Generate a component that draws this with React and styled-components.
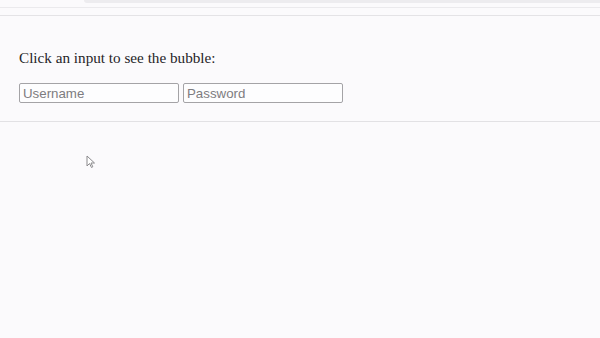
import React from "react";
import styled, { createGlobalStyle } from "styled-components";

const Global = createGlobalStyle`
    html, body {
        margin: 0;
        padding: 0;
        background: #fbfafc;
    }
    body {
        width: 600px;
        height: 338px;
        overflow: hidden;
        position: relative;
    }
`;

const Page = styled.div`
    width: 600px;
    height: 338px;
    display: flex;
    flex-direction: column;
    position: relative;
`;

const TopBar = styled.div`
    height: 15px;
    display: flex;
    flex-direction: column;
    border-bottom: 1px solid #e4e3e6;
`;

const Tab = styled.div`
    height: 3px;
    margin-left: 84px;
    background: #edecef;
    border-bottom-left-radius: 4px;
`;

const Rule = styled.div`
    height: 1px;
    margin-top: 4px;
    background: #ebeaed;
`;

const Section = styled.div`
    padding: 33px 19px 18px;
    border-bottom: 1px solid #e2e1e4;
    display: flex;
    flex-direction: column;
    gap: 16px;
`;

const Prompt = styled.p`
    margin: 0;
    font-family: "Liberation Serif", "Times New Roman", serif;
    font-size: 15.2px;
    line-height: 18px;
    color: #262528;
`;

const Fields = styled.div`
    display: flex;
    gap: 4px;
`;

const Field = styled.input`
    box-sizing: border-box;
    width: 160px;
    height: 20px;
    padding: 1px 3px;
    border: 1px solid #a4a3a6;
    border-radius: 2px;
    background: #fdfdfe;
    font-family: "Liberation Sans", Arial, sans-serif;
    font-size: 13.3px;
    color: #222;
    outline: none;

    &::placeholder {
        color: #7d7c80;
    }
`;

const Cursor = styled.svg`
    position: absolute;
    left: 86px;
    top: 155px;
`;

export default function App() {
    return (
        <Page>
            <Global />
            <TopBar>
                <Tab />
                <Rule />
            </TopBar>
            <Section>
                <Prompt>Click an input to see the bubble:</Prompt>
                <Fields>
                    <Field type="text" placeholder="Username" />
                    <Field type="password" placeholder="Password" />
                </Fields>
            </Section>
            <Cursor width="10" height="14" viewBox="0 0 10 14">
                <path d="M1 1 L1 11 L3.5 8.5 L5.5 12.5 L6.8 11.8 L5 8 L8.5 8 Z" fill="#fff" stroke="#8a898c" strokeWidth="1" />
            </Cursor>
        </Page>
    );
}
